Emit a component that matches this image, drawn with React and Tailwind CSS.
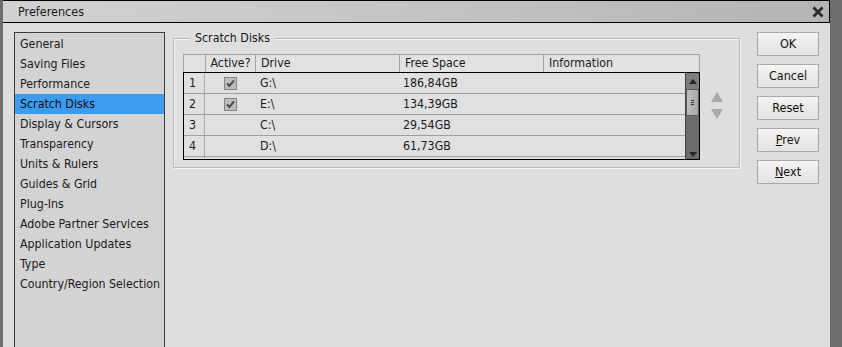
import React from 'react';

const NAV_ITEMS = [
  'General',
  'Saving Files',
  'Performance',
  'Scratch Disks',
  'Display & Cursors',
  'Transparency',
  'Units & Rulers',
  'Guides & Grid',
  'Plug-Ins',
  'Adobe Partner Services',
  'Application Updates',
  'Type',
  'Country/Region Selection',
];

const DISKS = [
  { n: 1, active: true, drive: 'G:\\', free: '186,84GB' },
  { n: 2, active: true, drive: 'E:\\', free: '134,39GB' },
  { n: 3, active: false, drive: 'C:\\', free: '29,54GB' },
  { n: 4, active: false, drive: 'D:\\', free: '61,73GB' },
];

function Check() {
  return (
    <span className="w-[13px] h-[13px] border border-[#858585] bg-[#bdbdbd] flex items-center justify-center">
      <svg width="11" height="11" viewBox="0 0 11 11">
        <path d="M2 5.3 L4.4 8 L9 2.3" fill="none" stroke="#4a4a4a" strokeWidth="2" />
      </svg>
    </span>
  );
}

function DialogButton({ children }) {
  return (
    <button className="w-[62px] h-[24px] border border-[#a9a9a9] bg-gradient-to-b from-[#f4f4f4] to-[#e2e2e2] text-[12.5px] text-[#111] flex items-center justify-center">
      {children}
    </button>
  );
}

export default function App() {
  return (
    <div className="w-[842px] h-[347px] bg-[#6e6e6e] overflow-hidden flex" style={{ fontFamily: '"DejaVu Sans Condensed", "Liberation Sans", Arial, sans-serif' }}>
      <div className="ml-[3px] w-[827px] h-full flex flex-col bg-[#dedede]">
        {/* title bar */}
        <div className="h-[23px] shrink-0 border-t border-b border-r border-black bg-gradient-to-r from-[#d2d2d2] via-[#c4c4c4] to-[#b4b4b4] flex items-center justify-between pl-[15px] pr-[4px]">
          <span className="text-[12.5px] text-[#1a1a1a] pt-[1px]">Preferences</span>
          <svg width="14" height="14" viewBox="0 0 14 14">
            <path d="M2.5 2.5 L11.5 11.5 M11.5 2.5 L2.5 11.5" stroke="#2a2a2a" strokeWidth="2.8" />
          </svg>
        </div>

        <div className="flex flex-1 min-h-0 pl-[11px] pt-[9px]">
          {/* sidebar */}
          <div className="w-[151px] shrink-0 h-[330px] border border-[#3c3c3c] bg-[#d3d3d3] pt-[1px]">
            {NAV_ITEMS.map(item => (
              <div
                key={item}
                className={`h-[20px] pl-[5px] flex items-center text-[12.3px] whitespace-nowrap ${item === 'Scratch Disks' ? 'bg-[#3d9bf0] text-[#111]' : 'text-[#1a1a1a]'}`}
              >
                {item}
              </div>
            ))}
          </div>

          {/* group box */}
          <div className="ml-[8px] w-[567px] shrink-0 pt-[6px]">
            <div className="relative h-[130px] border border-[#b9b9b9] shadow-[inset_1px_1px_0_#f4f4f4,1px_1px_0_#f4f4f4] pl-[9px] pt-[15px]">
              <span className="absolute left-[16px] top-[-9px] px-[5px] bg-[#dedede] text-[12.3px] text-[#1a1a1a] leading-[16px]">Scratch Disks</span>

              <div className="flex items-start">
                <div className="w-[517px] shrink-0">
                  {/* header */}
                  <div className="h-[18px] flex border border-[#a2a2a2] border-b-0 bg-[#e2e2e2] text-[12.3px] text-[#1a1a1a]">
                    <div className="w-[22px] border-r border-[#a2a2a2]" />
                    <div className="w-[50px] border-r border-[#a2a2a2] flex items-center justify-center">Active?</div>
                    <div className="w-[144px] border-r border-[#a2a2a2] flex items-center pl-[5px]">Drive</div>
                    <div className="w-[144px] border-r border-[#a2a2a2] flex items-center pl-[5px]">Free Space</div>
                    <div className="flex-1 flex items-center pl-[5px]">Information</div>
                  </div>
                  {/* body */}
                  <div className="h-[88px] border border-black flex overflow-hidden bg-[#e0e0e0]">
                    <div className="flex-1">
                      {DISKS.map(d => (
                        <div key={d.n} className="h-[21px] flex border-b border-[#9f9f9f] text-[12.3px] text-[#1a1a1a]">
                          <div className="w-[21px] border-r border-[#a8a8a8] pl-[5px] flex items-center">{d.n}</div>
                          <div className="w-[50px] flex items-center justify-center">{d.active && <Check />}</div>
                          <div className="w-[144px] flex items-center pl-[5px]">{d.drive}</div>
                          <div className="w-[144px] flex items-center pl-[4px]">{d.free}</div>
                          <div className="flex-1" />
                        </div>
                      ))}
                      <div className="h-[4px] flex">
                        <div className="w-[21px] border-r border-[#a8a8a8]" />
                      </div>
                    </div>
                    {/* scrollbar */}
                    <div className="w-[14px] bg-[#6b6b6b] border-l border-[#444] flex flex-col">
                      <div className="h-[16px] bg-[#7c7c7c] flex items-center justify-center">
                        <svg width="8" height="5" viewBox="0 0 8 5"><path d="M0 5 L4 0 L8 5 Z" fill="#262626" /></svg>
                      </div>
                      <div className="h-[27px] bg-gradient-to-r from-[#bcbcbc] to-[#a9a9a9] border border-[#5a5a5a] flex items-center justify-center">
                        <span className="w-[3px] h-[5px] border-y border-[#333] flex flex-col justify-center"><span className="h-px bg-[#333]" /></span>
                      </div>
                      <div className="flex-1" />
                      <div className="h-[10px] flex items-center justify-center">
                        <svg width="8" height="5" viewBox="0 0 8 5"><path d="M0 0 L4 5 L8 0 Z" fill="#262626" /></svg>
                      </div>
                    </div>
                  </div>
                </div>

                <div className="ml-[11px] mt-[38px] flex flex-col gap-[7px]">
                  <svg width="12" height="10" viewBox="0 0 12 10"><path d="M0 10 L6 0 L12 10 Z" fill="#a9a9a9" /></svg>
                  <svg width="12" height="10" viewBox="0 0 12 10"><path d="M0 0 L6 10 L12 0 Z" fill="#a9a9a9" /></svg>
                </div>
              </div>
            </div>
          </div>

          {/* buttons */}
          <div className="ml-[17px] flex flex-col gap-[8px]">
            <DialogButton>OK</DialogButton>
            <DialogButton>Cancel</DialogButton>
            <DialogButton>Reset</DialogButton>
            <DialogButton><span><span className="underline">P</span>rev</span></DialogButton>
            <DialogButton><span><span className="underline">N</span>ext</span></DialogButton>
          </div>
        </div>
      </div>
    </div>
  );
}
